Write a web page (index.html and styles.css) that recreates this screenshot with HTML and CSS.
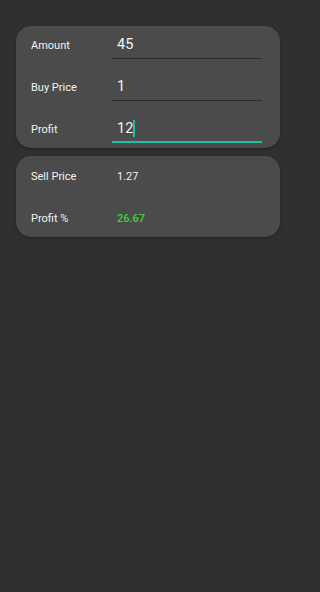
FILE: index.html
```html
<!DOCTYPE html>
<html>
<head>
<meta charset="utf-8">
<link rel="stylesheet" href="styles.css">
</head>
<body>
<div class="screen">
  <div class="card inputs">
    <div class="row">
      <div class="label">Amount</div>
      <div class="field"><span class="val">45</span></div>
    </div>
    <div class="row">
      <div class="label">Buy Price</div>
      <div class="field"><span class="val">1</span></div>
    </div>
    <div class="row">
      <div class="label">Profit</div>
      <div class="field focused"><span class="val">12</span><span class="cursor"></span></div>
    </div>
  </div>
  <div class="card results">
    <div class="row">
      <div class="label">Sell Price</div>
      <div class="result">1.27</div>
    </div>
    <div class="row">
      <div class="label">Profit %</div>
      <div class="result green">26.67</div>
    </div>
  </div>
</div>
</body>
</html>
```
FILE: styles.css
```css
html, body {
  margin: 0;
  padding: 0;
  background: #303030;
  height: 100%;
}
body {
  font-family: Roboto, "Liberation Sans", sans-serif;
  color: #ffffff;
}
.screen {
  width: 296px;
  box-sizing: border-box;
  padding: 26px 16px 0 16px;
  display: flex;
  flex-direction: column;
  gap: 8px;
}
.card {
  background: #4b4b4b;
  border-radius: 15px;
  box-shadow: 0 1px 3px rgba(0,0,0,0.35);
  display: flex;
  flex-direction: column;
  gap: 14px;
}
.inputs {
  padding: 5px 18px 5px 15px;
}
.results {
  padding: 6px 18px 5px 15px;
}
.row {
  display: flex;
  align-items: center;
  height: 28px;
}
.label {
  width: 81px;
  flex: none;
  font-size: 11px;
  color: #f2f2f2;
}
.field {
  flex: 1;
  height: 27px;
  border-bottom: 1px solid #2e2e2e;
  display: flex;
  align-items: center;
  padding-left: 5px;
  box-sizing: content-box;
}
.field.focused {
  height: 26px;
  border-bottom: 2px solid #22bcaa;
}
.val {
  font-size: 14.5px;
  color: #f4f4f4;
}
.cursor {
  display: inline-block;
  width: 2px;
  height: 17px;
  background: #22bcaa;
}
.result {
  padding-left: 5px;
  font-size: 11px;
  color: #f0f0f0;
}
.result.green {
  color: #3fd23f;
  font-weight: 500;
}
```
